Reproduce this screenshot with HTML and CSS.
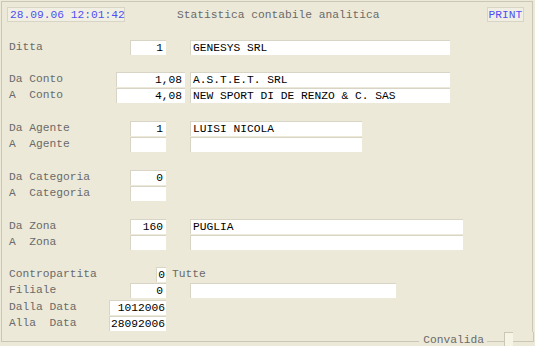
FILE: index.html
```html
<!DOCTYPE html>
<html>
<head>
<meta charset="utf-8">
<link rel="stylesheet" href="styles.css">
</head>
<body>
<div class="frame">
  <div class="header">
    <div class="stamp">28.09.06 12:01:42</div>
    <div class="title">Statistica contabile analitica</div>
    <div class="print">PRINT</div>
  </div>

  <div class="group g-first">
    <div class="row">
      <div class="lead"><span class="lbl">Ditta</span><span class="fld num">1</span></div>
      <span class="fld name w-ditta">GENESYS SRL</span>
    </div>
  </div>

  <div class="group g16">
    <div class="row">
      <div class="lead wide"><span class="lbl">Da Conto</span><span class="fld num conto">1,08</span></div>
      <span class="fld name w-conto">A.S.T.E.T. SRL</span>
    </div>
    <div class="row">
      <div class="lead wide"><span class="lbl">A  Conto</span><span class="fld num conto">4,08</span></div>
      <span class="fld name w-conto">NEW SPORT DI DE RENZO &amp; C. SAS</span>
    </div>
  </div>

  <div class="group g17">
    <div class="row">
      <div class="lead"><span class="lbl">Da Agente</span><span class="fld num">1</span></div>
      <span class="fld name w-agente">LUISI NICOLA</span>
    </div>
    <div class="row">
      <div class="lead"><span class="lbl">A  Agente</span><span class="fld num"></span></div>
      <span class="fld name w-agente"></span>
    </div>
  </div>

  <div class="group g17">
    <div class="row">
      <div class="lead"><span class="lbl">Da Categoria</span><span class="fld num">0</span></div>
    </div>
    <div class="row">
      <div class="lead"><span class="lbl">A  Categoria</span><span class="fld num"></span></div>
    </div>
  </div>

  <div class="group g17">
    <div class="row">
      <div class="lead"><span class="lbl">Da Zona</span><span class="fld num">160</span></div>
      <span class="fld name w-zona">PUGLIA</span>
    </div>
    <div class="row">
      <div class="lead"><span class="lbl">A  Zona</span><span class="fld num"></span></div>
      <span class="fld name w-zona"></span>
    </div>
  </div>

  <div class="group g16">
    <div class="row">
      <div class="lead"><span class="lbl">Contropartita</span><span class="fld num tiny">0</span></div>
      <span class="lbl tutte">Tutte</span>
    </div>
    <div class="row">
      <div class="lead"><span class="lbl">Filiale</span><span class="fld num">0</span></div>
      <span class="fld name w-filiale"></span>
    </div>
    <div class="row r-date">
      <div class="lead"><span class="lbl">Dalla Data</span><span class="fld num date">1012006</span></div>
    </div>
    <div class="row">
      <div class="lead"><span class="lbl">Alla  Data</span><span class="fld num date">28092006</span></div>
    </div>
  </div>
</div>
<div class="footer">
  <div class="fl fl-left"></div>
  <span class="conv">Convalida</span>
  <div class="fl fl-mid"></div>
  <div class="cbox"></div>
  <div class="fl fl-right"></div>
</div>
</body>
</html>
```

FILE: styles.css
```css
html, body {
  margin: 0;
  padding: 0;
  background: #ECE9D8;
}
body {
  width: 535px;
  height: 346px;
  overflow: hidden;
  font-family: "Courier New", "Nimbus Mono PS", "Nimbus Mono L", "FreeMono", "Liberation Mono", monospace;
  font-size: 11.25px;
  color: #6a6a6a;
}
.frame {
  box-sizing: border-box;
  margin: 1px 0 0 1px;
  width: 532px;
  height: 331px;
  border: 1px solid #cbc7b7;
  border-bottom: none;
  padding-top: 5px;
}
.header {
  display: flex;
  align-items: center;
  height: 15px;
  padding-left: 5px;
}
.stamp {
  box-sizing: border-box;
  width: 118px;
  height: 15px;
  line-height: 14px;
  padding-left: 2px;
  background: #F1EFE4;
  border: 1px solid #D9D5C6;
  color: #4f4ff5;
  white-space: pre;
}
.title {
  margin-left: 52px;
  white-space: pre;
}
.print {
  box-sizing: border-box;
  margin-left: auto;
  margin-right: 8px;
  width: 37px;
  height: 15px;
  line-height: 14px;
  text-align: center;
  background: #F1EFE4;
  border: 1px solid #D9D5C6;
  color: #4f4ff5;
}
.g-first { margin-top: 18px; }
.g16 { margin-top: 16px; }
.g17 { margin-top: 17px; }
.row {
  display: flex;
  align-items: flex-start;
  height: 16px;
  padding-left: 7px;
}
.r-date { margin-top: 1px; }
.lead {
  display: flex;
  justify-content: space-between;
  align-items: center;
  width: 157px;
  height: 15px;
}
.lead.wide { width: 176px; }
.lbl {
  white-space: pre;
  line-height: 15px;
}
.fld {
  box-sizing: border-box;
  display: block;
  height: 15px;
  line-height: 14px;
  background: #ffffff;
  border-top: 1px solid #d8d4c6;
  border-left: 1px solid #d8d4c6;
  color: #000;
  white-space: pre;
  overflow: hidden;
}
.num {
  width: 36px;
  text-align: right;
  padding-right: 3px;
}
.num.conto { width: 69px; }
.num.tiny { width: 10px; padding-right: 1px; }
.num.date { width: 57px; padding-right: 1px; }
.name {
  margin-left: 24px;
  padding-left: 2px;
}
.wide + .name { margin-left: 5px; }
.w-ditta { width: 260px; }
.w-conto { width: 260px; }
.w-agente { width: 172px; }
.w-zona { width: 273px; }
.w-filiale { width: 206px; }
.tutte { margin-left: 6px; }
.footer {
  display: flex;
  align-items: flex-start;
  width: 533px;
  margin-left: 1px;
  height: 14px;
}
.fl {
  box-sizing: border-box;
  height: 10px;
  border-bottom: 1px solid #cbc7b7;
}
.fl-left { flex: 1; border-left: 1px solid #cbc7b7; }
.fl-mid { width: 17px; margin-left: 3px; }
.fl-right { width: 21px; border-right: 1px solid #cbc7b7; }
.conv {
  margin-left: 4px;
  line-height: 12px;
  margin-top: 2px;
  color: #6a6a6a;
}
.cbox {
  box-sizing: border-box;
  width: 9px;
  height: 14px;
  background: #F6F4E4;
  border-top: 1px solid #cbc7b7;
  border-left: 1px solid #cbc7b7;
}
```
